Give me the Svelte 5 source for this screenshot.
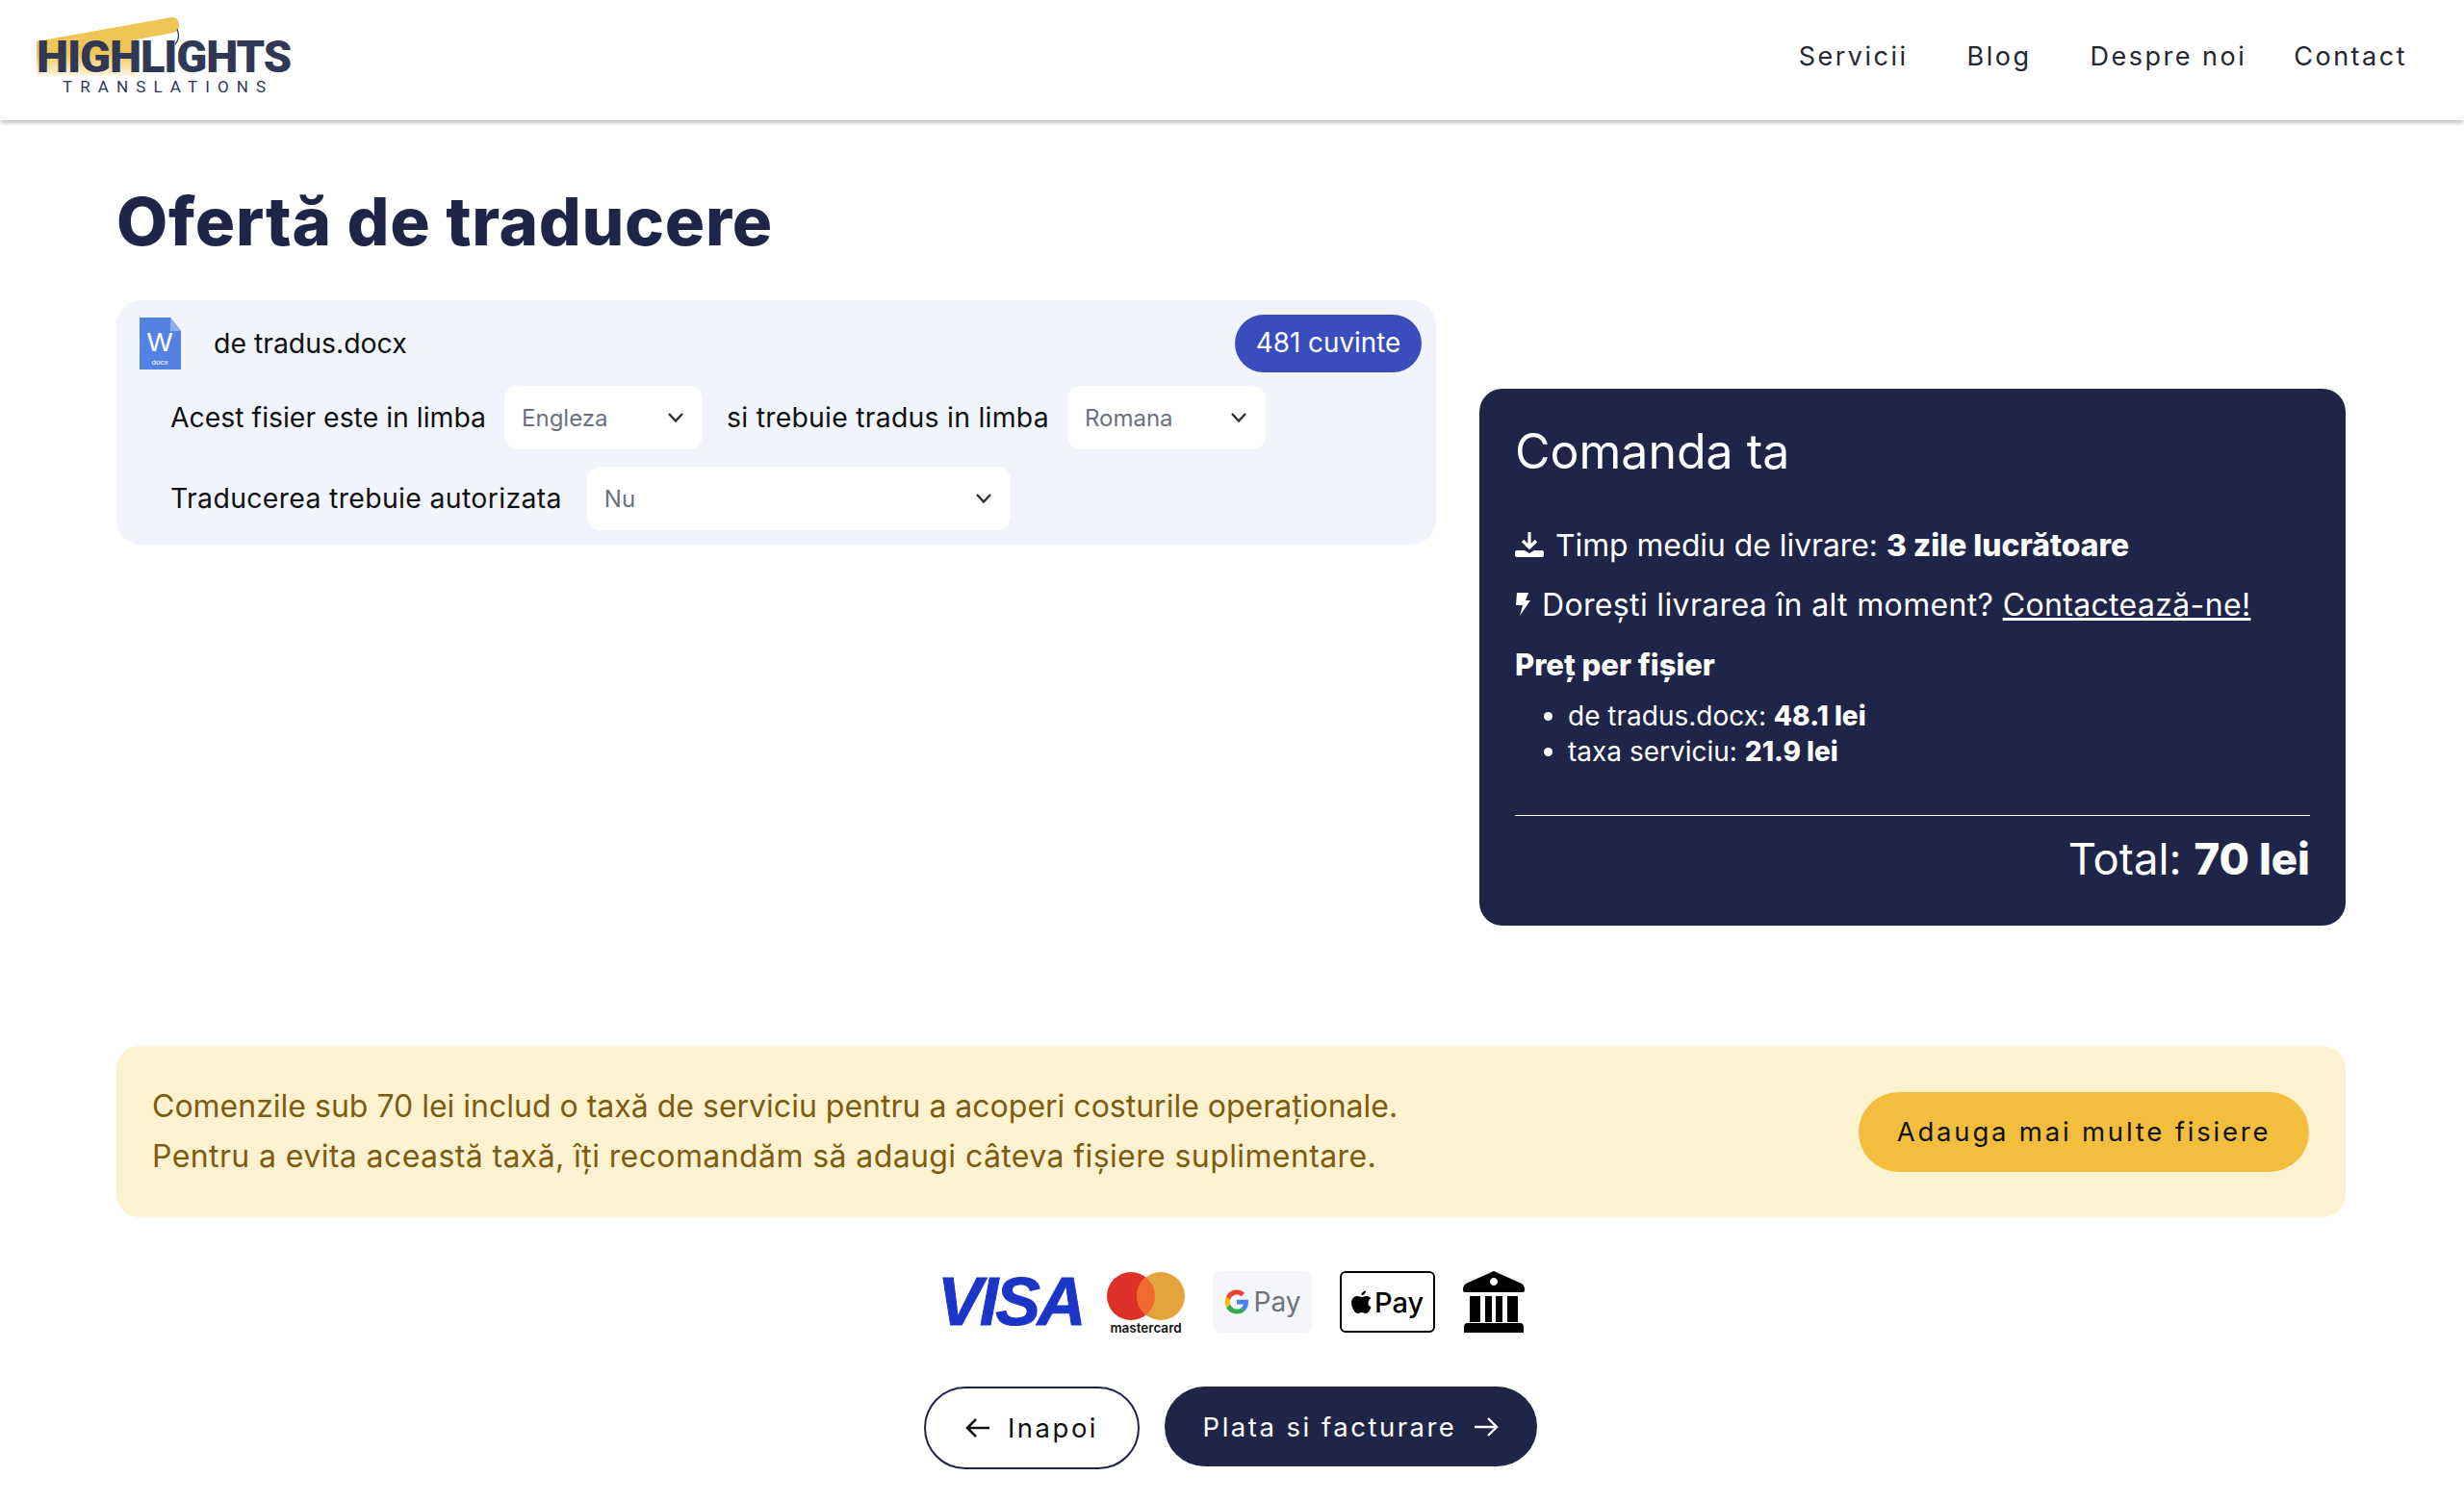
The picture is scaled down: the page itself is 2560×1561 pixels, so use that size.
<script>
	const languages = [
		{ label: 'Acest fisier este in limba', value: 'Engleza' },
		{ label: 'si trebuie tradus in limba', value: 'Romana' }
	]
	const nav = ['Servicii', 'Blog', 'Despre noi', 'Contact']
</script>

{#snippet chevron()}
	<svg class="chevron" width="18" height="12" viewBox="0 0 18 12"><path d="M2 2l7 7.5L16 2" fill="none" stroke="#2b2f38" stroke-width="2.4" /></svg>
{/snippet}

<header class="topbar">
	<div class="logo">
		<svg class="logo-beam" width="160" height="70" viewBox="0 0 160 70">
			<defs>
				<linearGradient id="beam" x1="0" y1="0" x2="0" y2="1">
					<stop offset="0.62" stop-color="#f0c557" />
					<stop offset="1" stop-color="#fcf6e0" />
				</linearGradient>
			</defs>
			<path d="M0 26L140 1q7-1 8 7t-6 9L105 24V62H0z" fill="url(#beam)" />
			<path d="M146 13q4 9-2 16" fill="none" stroke="#2f3855" stroke-width="1.200" />
		</svg>
		<div class="logo-name">HIGHLIGHTS</div>
		<div class="logo-sub">TRANSLATIONS</div>
	</div>
	<nav class="menu">
		{#each nav as item}
			<span>{item}</span>
		{/each}
	</nav>
</header>

<main class="page">
	<h1>Ofertă de traducere</h1>

	<div class="columns">
		<section class="file-card">
			<div class="file-row">
				<svg class="doc-icon" width="44" height="54" viewBox="0 0 44 54">
					<path d="M1 0H33L44 14V54H1z" fill="#5482e2" />
					<path d="M33 0L44 14H33z" fill="#8fadea" />
					<text x="22" y="35" text-anchor="middle" class="doc-w">W</text>
					<text x="22" y="49" text-anchor="middle" class="doc-x">docx</text>
				</svg>
				<span class="file-name">de tradus.docx</span>
				<span class="pill">481 cuvinte</span>
			</div>
			<div class="field-row">
				{#each languages as lang}
					<span class="field-label">{lang.label}</span>
					<div class="select lang">{lang.value}{@render chevron()}</div>
				{/each}
			</div>
			<div class="field-row second">
				<span class="field-label">Traducerea trebuie autorizata</span>
				<div class="select wide">Nu{@render chevron()}</div>
			</div>
		</section>

		<aside class="order">
			<h2>Comanda ta</h2>
			<div class="line first">
				<svg width="30" height="28" viewBox="0 0 30 28"><path d="M15 1v15M8 10l7 7 7-7" fill="none" stroke="#fff" stroke-width="3.200" /><path d="M2 20h8l5 3 5-3h8a2 2 0 0 1 2 2v3a2 2 0 0 1-2 2H2a2 2 0 0 1-2-2v-3a2 2 0 0 1 2-2z" fill="#fff" /></svg>
				<span>Timp mediu de livrare: <b>3 zile lucrătoare</b></span>
			</div>
			<div class="line ask">
				<svg class="bolt" width="16" height="26" viewBox="0 0 16 26"><path d="M2 1h12l-3 8h5L5 25l3-11H1z" fill="#fff" /></svg>
				<span>Dorești livrarea în alt moment? <a href="#contact">Contactează-ne!</a></span>
			</div>
			<div class="line title"><b>Preț per fișier</b></div>
			<ul>
				<li>de tradus.docx: <b>48.1 lei</b></li>
				<li>taxa serviciu: <b>21.9 lei</b></li>
			</ul>
			<div class="total">Total: <b>70 lei</b></div>
		</aside>
	</div>

	<section class="notice">
		<p>Comenzile sub 70 lei includ o taxă de serviciu pentru a acoperi costurile operaționale.<br /><span class="wider">Pentru a evita această taxă, îți recomandăm să adaugi câteva fișiere suplimentare.</span></p>
		<button class="add">Adauga mai multe fisiere</button>
	</section>

	<div class="payments">
		<span class="visa">VISA</span>
		<div class="mc">
			<svg width="81" height="50" viewBox="0 0 81 50">
				<circle cx="25" cy="25" r="25" fill="#dc3029" />
				<circle cx="56" cy="25" r="25" fill="#e5a33b" />
				<path d="M40.500 5.400a25 25 0 0 1 0 39.200a25 25 0 0 1 0-39.200z" fill="#ee6a2e" />
			</svg>
			<span>mastercard</span>
		</div>
		<div class="gpay">
			<svg width="26" height="26" viewBox="0 0 26 26">
				<path d="M25 13.300c0-.9-.1-1.800-.2-2.600H13v4.900h6.800c-.3 1.600-1.200 2.900-2.500 3.800l4 3.100c2.300-2.200 3.700-5.400 3.700-9.200z" fill="#4285f4" />
				<path d="M13 25.500c3.300 0 6.100-1.100 8.300-3l-4-3.100c-1.100.8-2.500 1.200-4.300 1.200-3.200 0-5.900-2.100-6.900-5l-4.100 3.200c2.100 4.100 6.300 6.700 11 6.700z" fill="#34a853" />
				<path d="M6.100 15.600c-.5-1.600-.5-3.300 0-4.900L2 7.500c-1.700 3.400-1.700 7.500 0 10.900z" fill="#fbbc04" />
				<path d="M13 5.500c1.800 0 3.400.6 4.700 1.800l3.500-3.500C19 1.700 16.100.5 13 .5 8.300.5 4.100 3.100 2 7.500l4.100 3.200c1-2.900 3.700-5.200 6.900-5.200z" fill="#ea4335" />
			</svg>
			<span>Pay</span>
		</div>
		<div class="apay">
			<svg width="21" height="25" viewBox="0 0 21 25"><path d="M15 .5c.2 2-1.800 4.800-4.500 4.700C10.200 3 12.300.8 15 .5zM17.500 13c0-2.500 1.300-3.600 2.800-4.600-1-1.500-2.700-2.500-4.500-2.500-1.900-.1-3.600 1.100-4.800 1.100S7.900 5.900 6 5.900C1.700 6-1.600 11 1 17.500c1 2.500 3 6.500 5.300 6.500 1.700 0 2.500-1.100 4.600-1.100s2.700 1.100 4.500 1.100c2.400 0 4-3.500 5.200-6.400-2-.8-3.100-2.500-3.100-4.600z" fill="#000" /></svg>
			<span>Pay</span>
		</div>
		<svg class="bank" width="64" height="64" viewBox="0 0 64 64">
			<path fill-rule="evenodd" d="M32 0l29 13q3 2 3 5v2q0 2-2 2H2q-2 0-2-2v-2q0-3 3-5zM32 7a4 4 0 1 0 .01 0z" fill="#000" />
			<path d="M7 26h11v27H7zM23 26h7v27h-7zM34 26h7v27h-7zM46 26h11v27H46zM5 54h54q4 0 4 4v6H1v-6q0-4 4-4z" fill="#000" />
		</svg>
	</div>

	<div class="actions">
		<button class="back">
			<svg width="26" height="22" viewBox="0 0 26 22"><path d="M25 11H3M11 2l-9 9 9 9" fill="none" stroke="#111" stroke-width="2.600" /></svg>
			Inapoi
		</button>
		<button class="next">
			Plata si facturare
			<svg width="26" height="22" viewBox="0 0 26 22"><path d="M1 11h22M15 2l9 9-9 9" fill="none" stroke="#fff" stroke-width="2.400" /></svg>
		</button>
	</div>
</main>

<style>
	:global(body) {
		background: #fff;
		font-family: Inter, 'Liberation Sans', sans-serif;
		color: #111;
	}

	.topbar {
		display: flex;
		align-items: center;
		justify-content: space-between;
		height: 125px;
		padding: 0 59px 0 38px;
		background: #fff;
		box-shadow: 0 2px 5px rgba(0, 0, 0, 0.3);
		box-sizing: border-box;
	}

	.logo {
		position: relative;
		width: 266px;
		height: 83px;
		margin-top: -8px;
		color: #2f3855;
		display: flex;
		flex-direction: column;
		justify-content: flex-end;
	}
	.logo-beam {
		position: absolute;
		left: 0;
		top: 0;
	}
	.logo-name {
		position: relative;
		font-family: Roboto, sans-serif;
		font-weight: 900;
		font-size: 47px;
		line-height: 38px;
		letter-spacing: -1.1px;
		white-space: nowrap;
	}
	.logo-sub {
		position: relative;
		font-family: Roboto, sans-serif;
		font-size: 17px;
		line-height: 16px;
		letter-spacing: 8.1px;
		margin: 4px 0 2px 27px;
		white-space: nowrap;
	}

	.menu {
		display: flex;
		gap: 61px;
		font-size: 27px;
		letter-spacing: 2.500px;
		color: #24272f;
		padding-bottom: 8px;
	}
	.menu span:last-child {
		margin-left: -12px;
	}

	.page {
		padding: 0 123px 0 121px;
	}

	h1 {
		margin: 0;
		padding-top: 63px;
		font-size: 69px;
		line-height: 84px;
		font-weight: 800;
		color: #1f2548;
		letter-spacing: 0.7px;
	}

	.columns {
		display: flex;
		align-items: flex-start;
		justify-content: space-between;
		margin-top: 40px;
	}

	.file-card {
		width: 1371px;
		height: 254px;
		box-sizing: border-box;
		padding: 15px 15px 0 23px;
		background: #f1f4fc;
		border-radius: 26px;
		font-size: 28.4px;
	}
	.file-row {
		display: flex;
		align-items: center;
		height: 60px;
	}
	.doc-icon {
		flex: none;
	}
	.doc-w {
		font-size: 28px;
		fill: #fff;
		font-family: 'Liberation Sans', sans-serif;
	}
	.doc-x {
		font-size: 8px;
		fill: #fff;
		font-family: 'Liberation Sans', sans-serif;
	}
	.file-name {
		margin-left: 34px;
		padding-bottom: 2px;
	}
	.pill {
		margin-left: auto;
		height: 60px;
		width: 194px;
		display: flex;
		align-items: center;
		justify-content: center;
		border-radius: 30px;
		background: #3a4dbd;
		color: #fff;
		font-size: 27.8px;
		padding-bottom: 2px;
		box-sizing: border-box;
	}

	.field-row {
		display: flex;
		align-items: center;
		gap: 19px;
		margin: 14px 0 0 33px;
		height: 66px;
	}
	.field-row.second {
		margin-top: 18px;
		gap: 26px;
	}
	.field-label {
		padding-bottom: 2px;
	}
	.second .field-label {
		letter-spacing: 0.35px;
	}
	.field-label + .select + .field-label {
		margin-left: 6px;
		letter-spacing: 0.25px;
	}
	.select {
		display: flex;
		align-items: center;
		justify-content: space-between;
		height: 66px;
		box-sizing: border-box;
		padding: 0 19px 0 18px;
		background: #fff;
		border-radius: 14px;
		font-size: 24px;
		color: #6b7280;
	}
	.select.lang {
		width: 206px;
	}
	.select.wide {
		width: 440px;
	}

	.order {
		width: 900px;
		height: 558px;
		box-sizing: border-box;
		margin-top: 92px;
		padding: 35px 37px 0;
		background: #1f2548;
		border-radius: 24px;
		color: #fff;
		font-size: 32px;
	}
	h2 {
		margin: 0;
		font-size: 50px;
		line-height: 60px;
		font-weight: 400;
	}
	.line {
		display: flex;
		align-items: center;
		gap: 12px;
		margin: 0;
		height: 62px;
		white-space: nowrap;
	}
	.line.first {
		margin-top: 36px;
		font-size: 31.8px;
	}
	.line.ask {
		letter-spacing: 0.35px;
	}
	.line.title {
		font-size: 31px;
	}
	.line b,
	.total b,
	li b {
		font-weight: 800;
	}
	.line a {
		color: #fff;
		text-decoration: underline;
	}
	ul {
		margin: 5px 0 0;
		padding: 0 0 0 55px;
		font-size: 28px;
		line-height: 37px;
	}
	.total {
		margin-top: 47px;
		padding-top: 15px;
		border-top: 1.500px solid #fff;
		text-align: right;
		font-size: 45.5px;
		line-height: 60px;
	}

	.notice {
		display: flex;
		align-items: center;
		justify-content: space-between;
		height: 178px;
		box-sizing: border-box;
		margin-top: 125px;
		padding: 0 38px 0 37px;
		background: #fdf2d0;
		border-radius: 24px;
		color: #7d5c12;
		font-size: 32px;
		line-height: 52px;
	}
	.notice p {
		margin: 0;
	}
	.wider {
		letter-spacing: 0.4px;
	}
	button {
		font-family: inherit;
		cursor: pointer;
		border: 0;
	}
	.add {
		width: 468px;
		height: 83px;
		border-radius: 42px;
		background: #f3bd3e;
		color: #111;
		font-size: 27.5px;
		letter-spacing: 2.800px;
	}

	.payments {
		display: flex;
		align-items: center;
		justify-content: center;
		gap: 29px;
		margin-top: 55px;
		height: 66px;
	}
	.visa {
		font-family: 'Liberation Sans', sans-serif;
		font-style: italic;
		font-weight: 700;
		font-size: 70px;
		letter-spacing: -3px;
		color: #1b36c6;
		-webkit-text-stroke: 1px #1b36c6;
		width: 147px;
	}
	.mc {
		display: flex;
		flex-direction: column;
		align-items: center;
		width: 81px;
		padding-top: 3px;
	}
	.mc span {
		font-size: 13.5px;
		font-weight: 600;
		line-height: 16px;
	}
	.gpay {
		display: flex;
		align-items: center;
		justify-content: center;
		gap: 5px;
		width: 103px;
		height: 64px;
		border-radius: 8px;
		background: #f4f6fb;
		color: #6f7378;
		font-size: 28px;
	}
	.apay {
		display: flex;
		align-items: center;
		justify-content: center;
		gap: 3px;
		width: 99px;
		height: 64px;
		box-sizing: border-box;
		border: 2px solid #000;
		border-radius: 6px;
		font-size: 29px;
		font-weight: 500;
		color: #000;
	}

	.actions {
		display: flex;
		justify-content: center;
		align-items: flex-start;
		gap: 26px;
		margin-top: 55px;
		padding-right: 1px;
	}
	.back,
	.next {
		display: flex;
		align-items: center;
		justify-content: center;
		gap: 18px;
		font-size: 27.5px;
		letter-spacing: 2.500px;
	}
	.back {
		width: 224px;
		height: 86px;
		border-radius: 43px;
		background: #fff;
		border: 2px solid #1f2548;
		color: #111;
	}
	.next {
		width: 387px;
		height: 83px;
		border-radius: 42px;
		background: #1f2548;
		color: #fff;
	}
</style>
